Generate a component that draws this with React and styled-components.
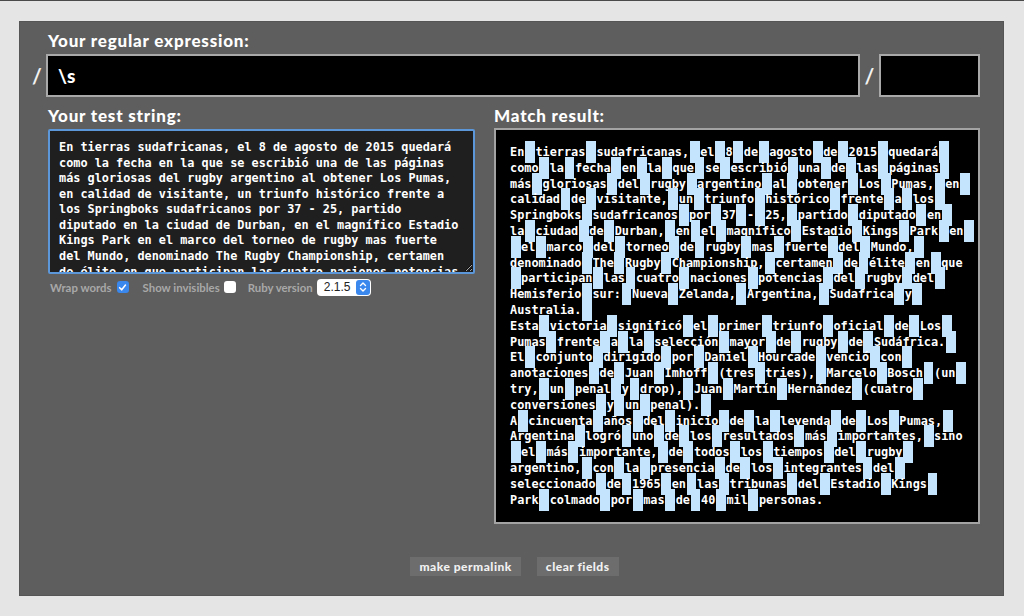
import React from "react";
import styled, { createGlobalStyle } from "styled-components";

const GlobalStyle = createGlobalStyle`
  html, body {
    margin: 0;
    padding: 0;
    background: #e5e5e5;
  }
  * { box-sizing: border-box; }
`;

const Page = styled.div`
  border-top: 1px solid #4a4a4a;
  min-height: 616px;
  padding: 20px 20px 0 19px;
`;

const Panel = styled.div`
  width: 985px;
  background: #5e5e5e;
  border: 1px solid #555;
  padding: 9px 23px 19px 8px;
  font-family: Lato, "Open Sans", sans-serif;
`;

const Heading = styled.div`
  margin-left: ${(p) => p.$indent || 0}px;
  font-size: 17px;
  line-height: 20px;
  font-weight: 900;
  letter-spacing: 0.8px;
  color: #fff;
  margin-bottom: ${(p) => p.$below || 0}px;
`;

const RegexRow = styled.div`
  display: grid;
  grid-template-columns: 18px 1fr 19px 101px;
  align-items: center;
  margin-top: 3px;
`;

const Slash = styled.span`
  text-align: center;
  color: #f2f2f2;
  font-size: 21px;
  font-weight: 700;
  line-height: 43px;
`;

const RegexInput = styled.input`
  width: 100%;
  min-width: 0;
  height: 43px;
  background: #000;
  border: 2px solid #a9a9a9;
  color: #fff;
  font-family: Lato, sans-serif;
  font-weight: 900;
  font-size: 19px;
  padding: 0 10px;
  outline: none;
`;

const Columns = styled.div`
  display: grid;
  grid-template-columns: 427px 486px;
  column-gap: 19px;
  margin: 9px 0 0 20px;
  align-items: start;
`;

const Column = styled.div`
  display: flex;
  flex-direction: column;
`;

const TestArea = styled.textarea`
  display: block;
  width: 427px;
  height: 145px;
  margin-top: 1px;
  background: #201f1f;
  border: 2px solid #5b97d9;
  border-radius: 2px;
  outline: none;
  color: #fff;
  font-family: "DejaVu Sans Mono", "Liberation Mono", monospace;
  font-weight: 700;
  font-size: 11.85px;
  line-height: 15.56px;
  padding: 9px 12px 9px 9px;
  overflow: hidden;
  resize: both;
`;

const Options = styled.div`
  display: flex;
  align-items: center;
  height: 18px;
  margin-top: 4px;
  padding-left: 2px;
  font-size: 11.4px;
  font-weight: 700;
  color: #a8a8a8;
`;

const OptionLabel = styled.span`
  margin-left: ${(p) => p.$gap || 0}px;
  margin-right: ${(p) => p.$after || 6}px;
  white-space: nowrap;
`;

const Box = styled.span`
  width: 12px;
  height: 12px;
  border-radius: 3px;
  display: inline-flex;
  align-items: center;
  justify-content: center;
  background: ${(p) => (p.$checked ? "#3a87ee" : "#fff")};
`;

const Select = styled.div`
  display: flex;
  align-items: center;
  width: 54px;
  height: 17px;
  background: #fff;
  border-radius: 4px;
  overflow: hidden;
  font-family: "Liberation Sans", Arial, sans-serif;
  font-weight: 400;
  font-size: 12px;
  color: #222;
`;

const SelectValue = styled.span`
  flex: 1;
  padding-left: 7px;
`;

const Stepper = styled.span`
  width: 14px;
  height: 15px;
  margin-right: 1px;
  border-radius: 3px;
  background: #3a87ee;
  display: flex;
  align-items: center;
  justify-content: center;
`;

const MatchBox = styled.div`
  background: #000;
  border: 2px solid #a3a3a3;
  padding: 15px 10px 14px 14px;
  min-height: 396px;
  color: #fff;
  font-family: "DejaVu Sans Mono", "Liberation Mono", monospace;
  font-weight: 700;
  font-size: 11.85px;
  line-height: 15.8px;
  overflow: hidden;
`;

const MatchLine = styled.div`
  white-space: pre;
  height: 15.8px;
`;

const Hit = styled.span`
  background: #c4e3fd;
  padding: 4px 1.4px;
  margin: 0 0.6px;
`;

const ButtonRow = styled.div`
  display: flex;
  justify-content: center;
  gap: 16px;
  margin-top: 33px;
  padding-left: 21px;
`;

const Button = styled.button`
  height: 19px;
  padding: 0 9px;
  border: none;
  background: #6d6d6d;
  color: #f2f2f2;
  font-family: Lato, sans-serif;
  font-weight: 900;
  font-size: 12px;
  letter-spacing: 0.5px;
  cursor: pointer;
`;

const testString =
  "En tierras sudafricanas, el 8 de agosto de 2015 quedará como la fecha en la que se escribió una de las páginas más gloriosas del rugby argentino al obtener Los Pumas, en calidad de visitante, un triunfo histórico frente a los Springboks sudafricanos por 37 - 25, partido diputado en la ciudad de Durban, en el magnífico Estadio Kings Park en el marco del torneo de rugby mas fuerte del Mundo, denominado The Rugby Championship, certamen de élite en que participan las cuatro naciones potencias del rugby del Hemisferio sur: Nueva Zelanda, Argentina, Sudafrica y Australia.\nEsta victoria significó el primer triunfo oficial de Los Pumas frente a la selección mayor de rugby de Sudáfrica. El conjunto dirigido por Daniel Hourcade venció con anotaciones de Juan Imhoff (tres tries), Marcelo Bosch (un try, un penal y drop), Juan Martín Hernández (cuatro conversiones y un penal).\nA cincuenta años del inicio de la leyenda de Los Pumas, Argentina logró uno de los resultados más importantes, sino el más importante, de todos los tiempos del rugby argentino, con la presencia de los integrantes del seleccionado de 1965 en las tribunas del Estadio Kings Park colmado por mas de 40 mil personas.";

const matchLines = [
  "En tierras sudafricanas, el 8 de agosto de 2015 quedará ",
  "como la fecha en la que se escribió una de las páginas ",
  "más gloriosas del rugby argentino al obtener Los Pumas, en ",
  "calidad de visitante, un triunfo histórico frente a los ",
  "Springboks sudafricanos por 37 - 25, partido diputado en ",
  "la ciudad de Durban, en el magnífico Estadio Kings Park en ",
  " el marco del torneo de rugby mas fuerte del Mundo, ",
  "denominado The Rugby Championship, certamen de élite en que",
  " participan las cuatro naciones potencias del rugby del ",
  "Hemisferio sur: Nueva Zelanda, Argentina, Sudafrica y ",
  "Australia. ",
  "Esta victoria significó el primer triunfo oficial de Los ",
  "Pumas frente a la selección mayor de rugby de Sudáfrica. ",
  "El conjunto dirigido por Daniel Hourcade venció con ",
  "anotaciones de Juan Imhoff (tres tries), Marcelo Bosch (un ",
  "try, un penal y drop), Juan Martín Hernández (cuatro ",
  "conversiones y un penal). ",
  "A cincuenta años del inicio de la leyenda de Los Pumas, ",
  "Argentina logró uno de los resultados más importantes, sino",
  " el más importante, de todos los tiempos del rugby ",
  "argentino, con la presencia de los integrantes del ",
  "seleccionado de 1965 en las tribunas del Estadio Kings ",
  "Park colmado por mas de 40 mil personas.",
];

function renderLine(line) {
  const parts = line.split(" ");
  const out = [];
  parts.forEach((part, i) => {
    if (i > 0) out.push(<Hit key={"h" + i}> </Hit>);
    if (part) out.push(<React.Fragment key={"t" + i}>{part}</React.Fragment>);
  });
  return out;
}

const Check = () => (
  <svg width="9" height="9" viewBox="0 0 10 10">
    <path d="M1.8 5.2 L4.1 7.6 L8.3 2.2" fill="none" stroke="#fff" strokeWidth="1.7" strokeLinecap="round" strokeLinejoin="round" />
  </svg>
);

const Chevrons = () => (
  <svg width="8" height="12" viewBox="0 0 8 12">
    <path d="M1.5 4.5 L4 2 L6.5 4.5 M1.5 7.5 L4 10 L6.5 7.5" fill="none" stroke="#fff" strokeWidth="1.4" strokeLinecap="round" strokeLinejoin="round" />
  </svg>
);

export default function App() {
  return (
    <>
      <GlobalStyle />
      <Page>
        <Panel>
          <Heading $indent={20}>Your regular expression:</Heading>
          <RegexRow>
            <Slash>/</Slash>
            <RegexInput defaultValue={"\\s"} spellCheck={false} />
            <Slash>/</Slash>
            <RegexInput defaultValue="" spellCheck={false} />
          </RegexRow>
          <Columns>
            <Column>
              <Heading $below={2}>Your test string:</Heading>
              <TestArea defaultValue={testString} spellCheck={false} />
              <Options>
                <OptionLabel $after={5}>Wrap words</OptionLabel>
                <Box $checked>
                  <Check />
                </Box>
                <OptionLabel $gap={14} $after={4}>Show invisibles</OptionLabel>
                <Box />
                <OptionLabel $gap={12} $after={4}>Ruby version</OptionLabel>
                <Select>
                  <SelectValue>2.1.5</SelectValue>
                  <Stepper>
                    <Chevrons />
                  </Stepper>
                </Select>
              </Options>
            </Column>
            <Column>
              <Heading $below={2}>Match result:</Heading>
              <MatchBox>
                {matchLines.map((l, i) => (
                  <MatchLine key={i}>{renderLine(l)}</MatchLine>
                ))}
              </MatchBox>
            </Column>
          </Columns>
          <ButtonRow>
            <Button>make permalink</Button>
            <Button>clear fields</Button>
          </ButtonRow>
        </Panel>
      </Page>
    </>
  );
}
